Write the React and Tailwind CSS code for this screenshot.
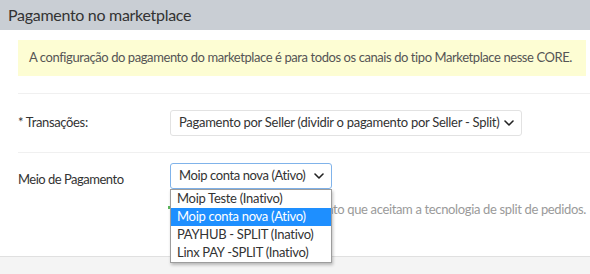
import React from "react";

const Chevron = () => (
  <svg width="10" height="6" viewBox="0 0 10 6" fill="none" className="shrink-0 ml-auto">
    <path d="M1 1 L5 5 L9 1" stroke="#222" strokeWidth="1.6" strokeLinecap="round" strokeLinejoin="round" />
  </svg>
);

export default function App() {
  return (
    <div className="w-[590px] h-[274px] overflow-hidden bg-white text-[#333] font-[family-name:Lato,sans-serif] tracking-[-0.35px]">
      <div className="h-[30px] bg-[#c9ced4] flex items-center pl-[8px] text-[16px] tracking-[-0.3px] text-[#333]">
        Pagamento no marketplace
      </div>
      <div className="pl-[18px] pt-[10px]">
        <div className="mr-[4px] h-[36px] bg-[#fdfdd3] flex items-center pl-[11px] text-[13px] tracking-[-0.42px] text-[#555] whitespace-nowrap">
          A configuração do pagamento do marketplace é para todos os canais do tipo Marketplace nesse CORE.
        </div>
        <div className="mt-[17px] border-t border-[#f0f0f0]"></div>
        <div className="flex items-center h-[58px]">
          <div className="w-[152px] text-[13px] whitespace-nowrap">* Transações:</div>
          <div className="w-[352px] h-[26px] border border-[#e2e2e2] rounded-[3px] flex items-center pl-[8px] pr-[7px] text-[13px] tracking-[-0.28px] whitespace-nowrap">
            <span>Pagamento por Seller (dividir o pagamento por Seller - Split)</span>
            <Chevron />
          </div>
        </div>
        <div className="border-t border-[#f0f0f0]"></div>
        <div className="flex pt-[10px] h-[103px]">
          <div className="w-[152px] text-[13px] tracking-[-0.5px] pt-[7px] whitespace-nowrap">Meio de Pagamento</div>
          <div className="relative w-[416px]">
            <div className="w-[162px] h-[26px] border border-[#80b3ea] rounded-[3px] flex items-center pl-[8px] pr-[7px] text-[13px] tracking-[-0.4px] whitespace-nowrap">
              <span>Moip conta nova (Ativo)</span>
              <Chevron />
            </div>
            <div className="mt-[11px] flex justify-end text-[13px] text-[#9a9a9a] whitespace-nowrap">
              Somente meios de pagamento que aceitam a tecnologia de split de pedidos.
            </div>
            <div className="absolute left-[-2px] top-[43px] w-[2px] h-[3px] bg-[#5cb85c]"></div>
            <div className="absolute left-0 top-[26px] w-[162px] bg-white border border-[#9d9d9d] shadow-[1px_2px_3px_rgba(0,0,0,0.25)] text-[13px] tracking-[-0.3px] text-[#333] whitespace-nowrap">
              <div className="h-[18px] flex items-center pl-[6px]">Moip Teste (Inativo)</div>
              <div className="h-[18px] flex items-center pl-[6px] bg-[#1e8fff] text-white">Moip conta nova (Ativo)</div>
              <div className="h-[18px] flex items-center pl-[6px]">PAYHUB - SPLIT (Inativo)</div>
              <div className="h-[18px] flex items-center pl-[6px]">Linx PAY -SPLIT (Inativo)</div>
            </div>
          </div>
        </div>
      </div>
      <div className="border-t border-[#e0e0e0] bg-[#f4f4f4] h-[20px]"></div>
    </div>
  );
}
